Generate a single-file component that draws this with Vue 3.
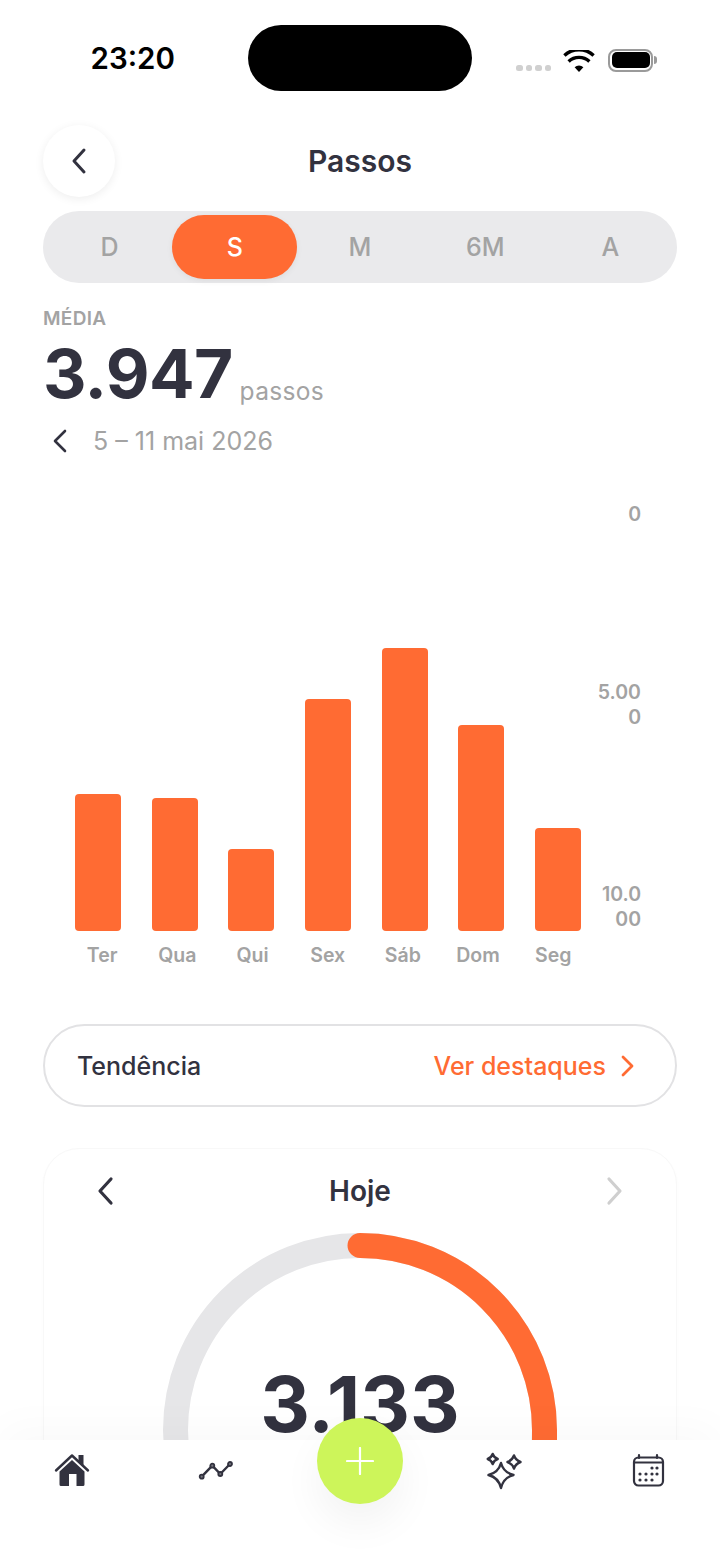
<script setup>
const tabs = ['D', 'S', 'M', '6M', 'A']
const bars = [137, 133, 82, 232, 283, 206, 103]
const days = ['Ter', 'Qua', 'Qui', 'Sex', 'Sáb', 'Dom', 'Seg']
</script>

<template>
  <div class="screen">
    <header class="status">
      <span class="time">23:20</span>
      <div class="island"></div>
      <div class="status-icons">
        <div class="signal"><i></i><i></i><i></i><i></i></div>
        <svg class="wifi" width="32" height="24" viewBox="0 0 32 24">
          <path d="M16 22 11.6 17.2a6.6 6.6 0 0 1 8.8 0Z" fill="#000"/>
          <path d="M5.6 11.4a15.4 15.4 0 0 1 20.8 0" fill="none" stroke="#000" stroke-width="3.4"/>
          <path d="M1.4 6.4a21.6 21.6 0 0 1 29.2 0" fill="none" stroke="#000" stroke-width="3.4" transform="translate(0 -1)"/>
        </svg>
        <div class="battery"><div class="battery-fill"></div></div>
        <div class="battery-tip"></div>
      </div>
    </header>

    <div class="title-row">
      <button class="back">
        <svg width="18" height="28" viewBox="0 0 18 28"><path d="M14 3 4 14l10 11" fill="none" stroke="#32323f" stroke-width="3" stroke-linecap="round" stroke-linejoin="round"/></svg>
      </button>
      <h1>Passos</h1>
    </div>

    <div class="segment">
      <div v-for="t in tabs" :key="t" class="tab" :class="{ active: t === 'S' }">{{ t }}</div>
    </div>

    <div class="summary">
      <div class="label">MÉDIA</div>
      <div class="value-row"><span class="value">3.947</span><span class="unit">passos</span></div>
      <div class="range">
        <svg width="16" height="24" viewBox="0 0 16 24"><path d="M13 2 3 12l10 10" fill="none" stroke="#32323f" stroke-width="2.6" stroke-linecap="round" stroke-linejoin="round"/></svg>
        <span>5 – 11 mai 2026</span>
      </div>
    </div>

    <section class="chart">
      <div class="plot">
        <div class="bars">
          <div v-for="(b, i) in bars" :key="i" class="bar-col">
            <div class="bar" :style="{ height: b + 'px' }"></div>
          </div>
        </div>
        <div class="days">
          <span v-for="d in days" :key="d">{{ d }}</span>
        </div>
      </div>
      <div class="axis">
        <span>0</span>
        <span>5.00<br>0</span>
        <span>10.0<br>00</span>
      </div>
    </section>

    <div class="trend">
      <span>Tendência</span>
      <span class="trend-link">Ver destaques
        <svg width="16" height="24" viewBox="0 0 16 24"><path d="M4 3l9 9-9 9" fill="none" stroke="#ff6b33" stroke-width="2.8" stroke-linecap="round" stroke-linejoin="round"/></svg>
      </span>
    </div>

    <section class="today">
      <div class="today-head">
        <svg width="20" height="30" viewBox="0 0 20 30"><path d="M16 3 5 15l11 12" fill="none" stroke="#32323f" stroke-width="3.2" stroke-linecap="round" stroke-linejoin="round"/></svg>
        <span>Hoje</span>
        <svg width="20" height="30" viewBox="0 0 20 30"><path d="M4 3l11 12L4 27" fill="none" stroke="#cfcfcf" stroke-width="3.2" stroke-linecap="round" stroke-linejoin="round"/></svg>
      </div>
      <div class="gauge">
        <svg class="gauge-svg" width="394" height="394" viewBox="0 0 394 394">
          <circle cx="197" cy="197" r="184.5" fill="none" stroke="#e6e6e8" stroke-width="25"/>
          <path d="M197 12.5A184.5 184.5 0 0 1 381.5 197V230" fill="none" stroke="#ff6b33" stroke-width="25" stroke-linecap="round"/>
        </svg>
        <div class="gauge-value">3.133</div>
      </div>
    </section>

    <nav class="nav">
      <svg class="ic-home" width="36" height="34" viewBox="0 0 36 34">
        <path d="M2 17.500 18 2.500 34 17.500" fill="none" stroke="#32323f" stroke-width="2.400" stroke-linecap="round" stroke-linejoin="round"/>
        <path d="M24.500 2h5v10.500l-5-4.700Z" fill="#32323f"/>
        <path d="M18 7 5.500 18.500V31.500a1.500 1.500 0 0 0 1.500 1.500H15V21h7.500V33H29a1.500 1.500 0 0 0 1.500-1.500V18.500Z" fill="#32323f"/>
      </svg>
      <svg class="ic-trend" width="36" height="22" viewBox="0 0 36 22">
        <path d="M3.700 16.700 14.300 5.700 22.300 14 32 4" fill="none" stroke="#32323f" stroke-width="2.400" stroke-linecap="round" stroke-linejoin="round"/>
        <g fill="#77777f" stroke="#32323f" stroke-width="1.800">
          <circle cx="3.700" cy="16.700" r="2"/><circle cx="14.300" cy="5.700" r="2"/><circle cx="22.300" cy="14" r="2"/><circle cx="32" cy="4" r="2"/>
        </g>
      </svg>
      <button class="fab">
        <svg width="28" height="28" viewBox="0 0 28 28"><path d="M14 1v26M1 14h26" stroke="#fff" stroke-width="2.200" stroke-linecap="round"/></svg>
      </button>
      <svg class="ic-spark" width="38" height="38" viewBox="0 0 38 38">
        <g fill="none" stroke="#32323f" stroke-width="2.400" stroke-linejoin="round">
          <path d="M16 11Q18.500 20.500 28.500 23 18.500 25.500 16 36 13.500 25.500 3.500 23 13.500 20.500 16 11Z"/>
          <path d="M7.700 2Q9 5.700 12.700 7 9 8.300 7.700 12 6.400 8.300 2.700 7 6.400 5.700 7.700 2Z"/>
          <path d="M29 3.500Q30.700 8.300 35.500 10 30.700 11.700 29 16.500 27.300 11.700 22.500 10 27.300 8.300 29 3.500Z"/>
        </g>
      </svg>
      <svg class="ic-cal" width="34" height="34" viewBox="0 0 34 34">
        <rect x="2" y="4.500" width="29" height="28" rx="4.500" fill="none" stroke="#32323f" stroke-width="2.200"/>
        <path d="M2 9.500h29M7 2v3M25 2v3" stroke="#32323f" stroke-width="2.200" stroke-linecap="round"/>
        <g fill="#32323f">
          <circle cx="20" cy="15" r="1.600"/><circle cx="25" cy="15" r="1.600"/>
          <circle cx="8" cy="21" r="1.600"/><circle cx="14" cy="21" r="1.600"/><circle cx="20" cy="21" r="1.600"/><circle cx="25" cy="21" r="1.600"/>
          <circle cx="8" cy="27" r="1.600"/><circle cx="14" cy="27" r="1.600"/><circle cx="20" cy="27" r="1.600"/>
        </g>
      </svg>
    </nav>
  </div>
</template>

<style>
body { margin: 0; background: #fff; }
</style>

<style scoped>
.screen {
  position: relative;
  width: 720px;
  height: 1565px;
  overflow: hidden;
  background: #fff;
  font-family: Inter, "Liberation Sans", sans-serif;
  color: #32323f;
}
.status {
  height: 125px;
  position: relative;
  box-sizing: border-box;
}
.time {
  position: absolute;
  left: 90.500px;
  top: 41px;
  font-size: 29.500px;
  line-height: 35px;
  font-weight: 600;
  color: #000;
}
.island {
  position: absolute;
  left: 248px;
  top: 25px;
  width: 224px;
  height: 66px;
  border-radius: 33px;
  background: #000;
}
.status-icons {
  position: absolute;
  left: 516px;
  top: 46px;
  display: flex;
  align-items: center;
}
.signal { display: flex; gap: 3px; margin-top: 16px; }
.signal i { width: 6.500px; height: 6.500px; border-radius: 2.500px; background: #d0d0d0; display: block; }
.wifi { margin-left: 12px; margin-top: 4px; }
.battery {
  width: 45px;
  height: 23px;
  margin-left: 13px;
  box-sizing: border-box;
  border: 2px solid #9a9a9a;
  border-radius: 8px;
  padding: 1.500px;
}
.battery-fill { width: 100%; height: 100%; background: #000; border-radius: 5px; }
.battery-tip { width: 2.500px; height: 8px; background: #9a9a9a; border-radius: 0 3px 3px 0; margin-left: 1px; }
.title-row {
  height: 72px;
  margin: 0 43px;
  display: flex;
  align-items: center;
  justify-content: center;
  position: relative;
}
.back {
  position: absolute;
  left: 0;
  top: 0;
  width: 72px;
  height: 72px;
  padding: 0;
  border: 0;
  border-radius: 50%;
  background: #fff;
  box-shadow: 0 2px 10px rgba(0, 0, 0, .07);
  display: flex;
  align-items: center;
  justify-content: center;
}
h1 { margin: 0; font-size: 30px; font-weight: 600; line-height: 74px; }
.segment {
  margin: 14px 43px 0;
  height: 72px;
  box-sizing: border-box;
  padding: 4px;
  border-radius: 36px;
  background: #eaeaec;
  display: grid;
  grid-template-columns: repeat(5, 1fr);
}
.tab {
  display: flex;
  align-items: center;
  justify-content: center;
  font-size: 25px;
  font-weight: 500;
  color: #a3a3a3;
  border-radius: 32px;
}
.tab.active { background: #ff6b33; color: #fff; box-shadow: 0 2px 6px rgba(0, 0, 0, .06); }
.summary { margin: 24px 43px 0; }
.label { font-size: 19px; line-height: 24px; font-weight: 600; color: #a3a3a3; letter-spacing: .3px; }
.value-row { display: flex; align-items: flex-end; margin-top: 9px; height: 68px; }
.value { font-size: 67.500px; line-height: 68px; font-weight: 700; color: #32323f; letter-spacing: -.6px; }
.unit { font-size: 24.500px; line-height: 24px; font-weight: 400; color: #a3a3a3; margin-left: 7px; margin-bottom: 5px; letter-spacing: .3px; }
.range {
  display: flex;
  align-items: center;
  gap: 25.500px;
  margin-top: 15px;
  padding-left: 8.500px;
  font-size: 25px;
  line-height: 36px;
  color: #a3a3a3;
}
.chart {
  margin-top: 43px;
  display: flex;
  height: 430px;
  margin-left: 59.500px;
  position: relative;
}
.plot { width: 537px; position: relative; }
.bars {
  height: 429px;
  display: grid;
  grid-template-columns: repeat(7, 1fr);
  align-items: end;
}
.bar-col { display: flex; justify-content: center; }
.bar { width: 46px; background: #ff6b33; border-radius: 4px; }
.days {
  display: grid;
  grid-template-columns: repeat(7, 75.200px);
  margin-left: 5px;
  margin-top: 12px;
  font-size: 19.500px;
  line-height: 24px;
  font-weight: 600;
  color: #a3a3a3;
  text-align: center;
}
.axis {
  width: 44.500px;
  height: 430px;
  display: flex;
  flex-direction: column;
  justify-content: space-between;
  align-items: flex-end;
  text-align: right;
  font-size: 19.500px;
  line-height: 25px;
  font-weight: 600;
  color: #a3a3a3;
}
.trend {
  margin: 92px 43px 0;
  height: 83px;
  box-sizing: border-box;
  border: 2px solid #e2e2e4;
  border-radius: 42px;
  padding: 0 40px 0 32px;
  display: flex;
  align-items: center;
  justify-content: space-between;
  font-size: 25px;
  font-weight: 500;
}
.trend-link { display: flex; align-items: center; gap: 13px; color: #ff6b33; }
.today {
  margin: 41px 43px 0;
  height: 420px;
  box-sizing: border-box;
  border: 1px solid #f8f8f8;
  border-radius: 36px;
  box-shadow: 0 2px 10px rgba(0, 0, 0, .012);
  background: #fff;
}
.today-head {
  display: flex;
  align-items: center;
  justify-content: space-between;
  padding: 27px 51px 0 51px;
  height: 30px;
  font-size: 28px;
  font-weight: 600;
}
.gauge { position: relative; width: 394px; height: 394px; margin: 27px auto 0; }
.gauge-svg { display: block; }
.gauge-value {
  position: absolute;
  left: 0;
  right: 0;
  top: 126px;
  text-align: center;
  font-size: 77px;
  line-height: 90px;
  font-weight: 700;
  color: #32323f;
}
.nav {
  position: absolute;
  left: 0;
  right: 0;
  bottom: 0;
  height: 125px;
  background: #fff;
  box-shadow: 0 -14px 40px rgba(0, 0, 0, .025);
}
.nav svg { position: absolute; }
.ic-home { left: 54px; top: 13px; }
.ic-trend { left: 198px; top: 20px; }
.ic-spark { left: 485px; top: 12px; }
.ic-cal { left: 632px; top: 13px; }
.fab {
  position: absolute;
  left: 317px;
  top: -22px;
  width: 86px;
  height: 86px;
  padding: 0;
  border: 0;
  border-radius: 50%;
  background: #cdf55a;
  box-shadow: 0 20px 40px rgba(0, 0, 0, .05);
}
.fab svg { left: 29px; top: 29px; }
</style>
